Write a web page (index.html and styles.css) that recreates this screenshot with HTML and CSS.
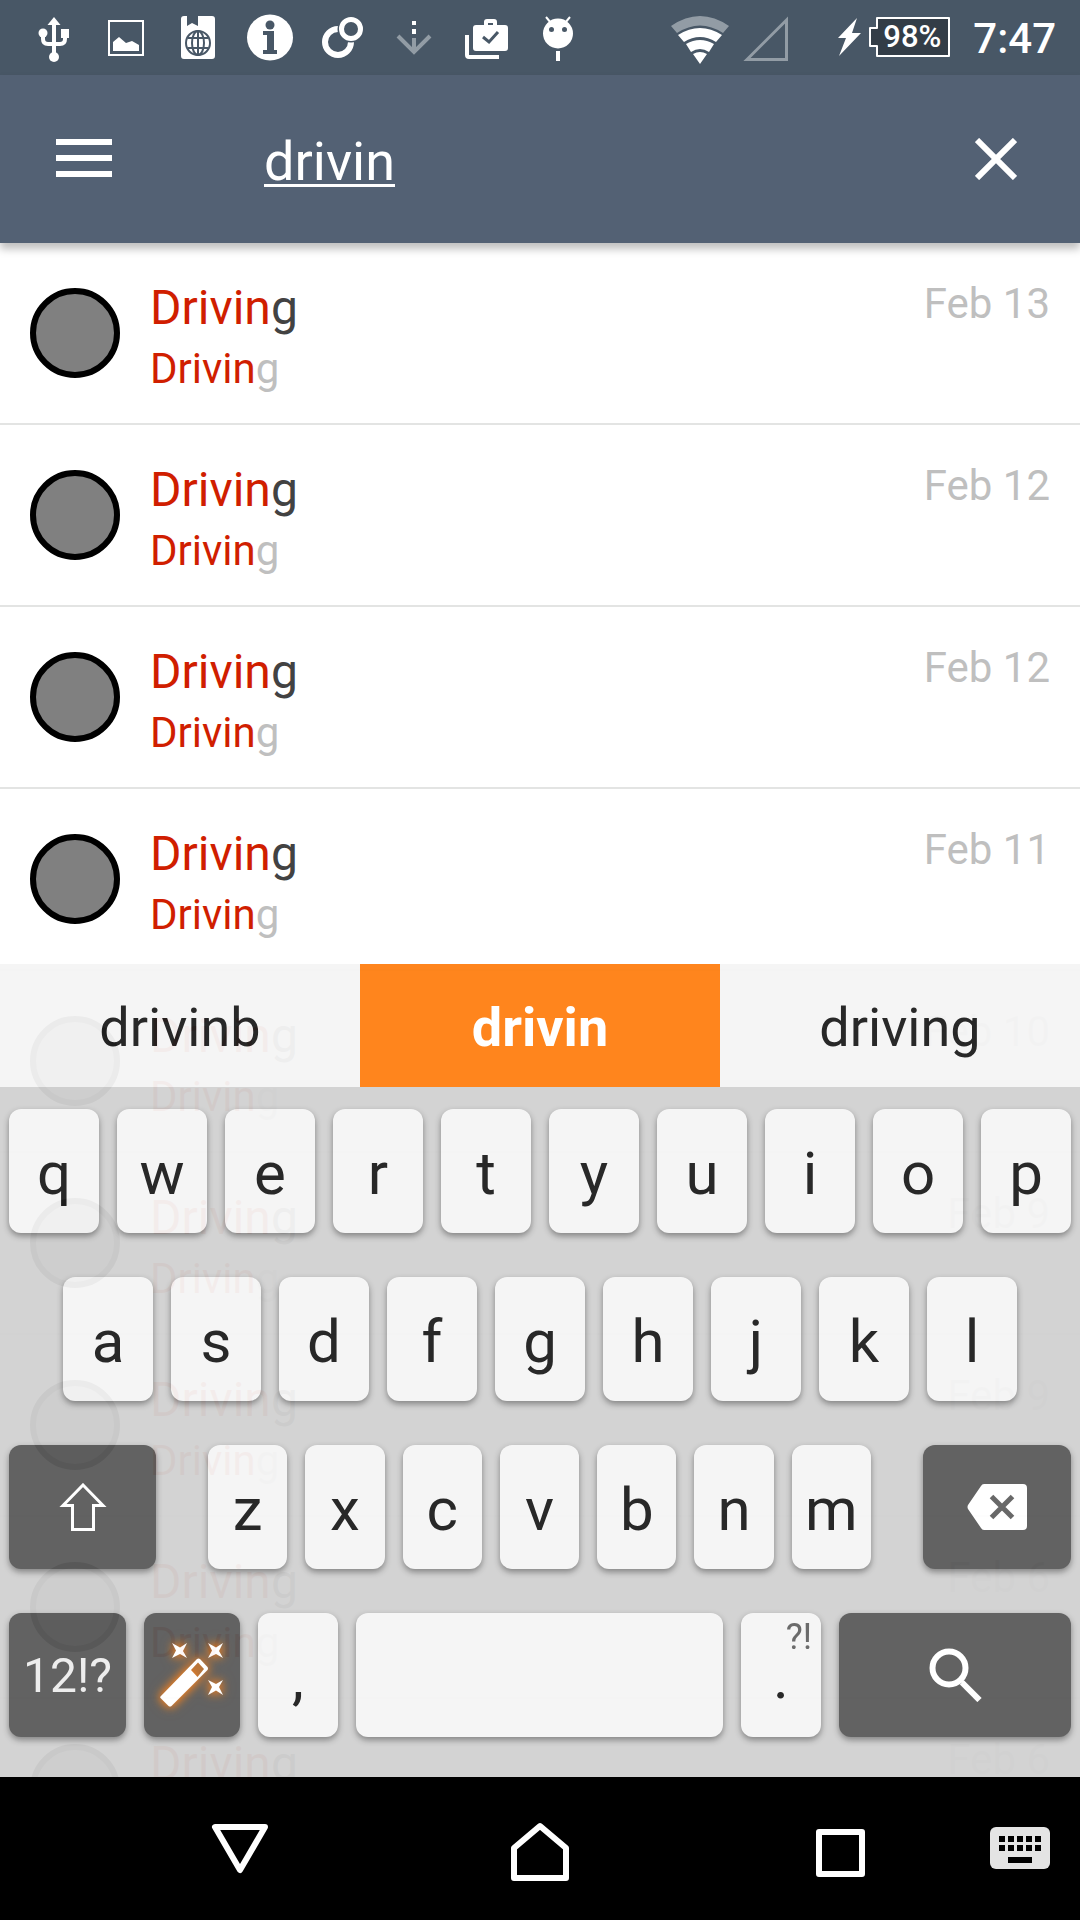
FILE: index.html
```html
<!DOCTYPE html>
<html lang="en">
<head>
<meta charset="utf-8">
<meta name="viewport" content="width=device-width, initial-scale=1">
<title>Search</title>
<link rel="stylesheet" href="styles.css">
</head>
<body>
<div class="app">
  <header class="status">
    <div class="status-left">
      <svg class="status-icon" viewBox="0 0 72 75" aria-hidden="true">
        <g fill="none" stroke="#fff" stroke-width="4"><path d="M36 24V56M25 34v5q0 5 5 5h12q5 0 5-5v-5"/></g>
        <path fill="#fff" d="M36 17l6.500 8h-13zM43 29h8v9h-8z"/><circle cx="25" cy="33" r="4.500" fill="#fff"/><circle cx="36" cy="57" r="5" fill="#fff"/>
      </svg>
      <svg class="status-icon" viewBox="0 0 72 75" aria-hidden="true">
        <path fill="none" stroke="#fff" stroke-width="2" d="M19 21h34v34H19z"/>
        <path fill="#fff" d="M23 51V42l6-5 7 6 6-2 7 4v6z"/>
      </svg>
      <svg class="status-icon" viewBox="0 0 72 75" aria-hidden="true">
        <path fill="#fff" d="M22 16h3v10l5-3 6 3V16h14q3 0 3 3v37q0 3-3 3H22q-3 0-3-3V19q0-3 3-3z"/>
        <g fill="none" stroke="#485766" stroke-width="2"><circle cx="36" cy="43" r="12"/><ellipse cx="36" cy="43" rx="6" ry="12"/><path d="M36 31v24M26 38h20M26 48h20"/></g>
      </svg>
      <svg class="status-icon" viewBox="0 0 72 75" aria-hidden="true">
        <circle cx="36" cy="37.500" r="23" fill="#fff"/>
        <circle cx="36" cy="25" r="4.500" fill="#485766"/>
        <path fill="#485766" d="M29 31h11v19h3v4H29v-4h4V35h-4z"/>
      </svg>
      <svg class="status-icon" viewBox="0 0 72 75" aria-hidden="true">
        <circle cx="32" cy="42" r="13" fill="none" stroke="#fff" stroke-width="6"/>
        <circle cx="45" cy="29" r="13.500" fill="#485766"/>
        <circle cx="45" cy="29" r="9.500" fill="none" stroke="#fff" stroke-width="5"/>
      </svg>
      <svg class="status-icon" viewBox="0 0 72 75" aria-hidden="true">
        <path fill="#fff" d="M34 21h4v4h-4zM34 29h4v5h-4z"/>
        <path fill="none" stroke="#929ca5" stroke-width="4" d="M36 38v13M20 36l16 16 16-16"/>
      </svg>
      <svg class="status-icon" viewBox="0 0 72 75" aria-hidden="true">
        <path fill="none" stroke="#fff" stroke-width="4" d="M17 35v20q0 2 2 2h30"/>
        <path fill="#fff" fill-rule="evenodd" d="M26 25h8v-3q0-3 3-3h7q3 0 3 3v3h8q3 0 3 3v20q0 3-3 3H26q-3 0-3-3V28q0-3 3-3zM38 23v2h5v-2z"/>
        <path fill="none" stroke="#485766" stroke-width="3" d="M33 37l6 5 9-10"/>
      </svg>
      <svg class="status-icon" viewBox="0 0 72 75" aria-hidden="true">
        <circle cx="36" cy="33.500" r="15" fill="#fff"/>
        <path fill="none" stroke="#fff" stroke-width="2" d="M24 17l5 6M48 17l-5 6"/>
        <circle cx="29.500" cy="29.500" r="2.500" fill="#485766"/><circle cx="42.500" cy="29.500" r="2.500" fill="#485766"/>
        <path fill="#fff" d="M34 51h4v10h-4z"/>
      </svg>
    </div>
    <div class="status-right">
      <svg class="wifi" viewBox="0 0 58 75" aria-hidden="true">
        <path fill="#929ca5" d="M0 26Q29 6 58 26L52 33Q29 18 6 33z"/>
        <path fill="#fff" d="M7 35Q29 21 51 35l-6 7Q29 32 13 42zM15 44Q29 36 43 44l-5 8Q29 46 20 52zM22 54q7-4 14 0l-7 10z"/>
      </svg>
      <svg class="signal" viewBox="0 0 46 75" aria-hidden="true">
        <path fill="none" stroke="#929ca5" stroke-width="3" d="M4 59.500L43.500 20v39.500z"/>
      </svg>
      <svg class="bolt" viewBox="0 0 23 75" aria-hidden="true">
        <path fill="#fff" d="M19 18L14 33h9L1 56l7-18H0z"/>
      </svg>
      <span class="battery">
        <svg class="battery-shape" viewBox="0 0 81 40" aria-hidden="true">
          <path fill="#333d47" stroke="#fff" stroke-width="2" stroke-linejoin="round" d="M8 1h72v38H8V29H1V11h7z"/>
        </svg>
        <span class="battery-text">98%</span>
      </span>
      <time class="clock">7:47</time>
    </div>
  </header>

  <div class="toolbar">
    <button class="icon-button" type="button" aria-label="Menu">
      <svg class="menu-icon" viewBox="0 0 56 42" aria-hidden="true"><path fill="#fff" d="M0 1h56v6H0zM0 17h56v6H0zM0 33h56v6H0z"/></svg>
    </button>
    <input class="search" type="text" value="drivin" aria-label="Search">
    <button class="icon-button" type="button" aria-label="Clear">
      <svg class="clear-icon" viewBox="0 0 42 42" aria-hidden="true"><path fill="none" stroke="#fff" stroke-width="6" d="M2 2l38 38M40 2L2 40"/></svg>
    </button>
  </div>

  <main class="content">
    <ul class="results">
      <li class="row"><span class="avatar"></span><div class="text"><h2 class="title"><mark>Drivin</mark>g</h2><p class="subtitle"><mark>Drivin</mark>g</p></div><time class="date">Feb 13</time></li>
      <li class="row"><span class="avatar"></span><div class="text"><h2 class="title"><mark>Drivin</mark>g</h2><p class="subtitle"><mark>Drivin</mark>g</p></div><time class="date">Feb 12</time></li>
      <li class="row"><span class="avatar"></span><div class="text"><h2 class="title"><mark>Drivin</mark>g</h2><p class="subtitle"><mark>Drivin</mark>g</p></div><time class="date">Feb 12</time></li>
      <li class="row"><span class="avatar"></span><div class="text"><h2 class="title"><mark>Drivin</mark>g</h2><p class="subtitle"><mark>Drivin</mark>g</p></div><time class="date">Feb 11</time></li>
      <li class="row"><span class="avatar"></span><div class="text"><h2 class="title"><mark>Drivin</mark>g</h2><p class="subtitle"><mark>Drivin</mark>g</p></div><time class="date">Feb 10</time></li>
      <li class="row"><span class="avatar"></span><div class="text"><h2 class="title"><mark>Drivin</mark>g</h2><p class="subtitle"><mark>Drivin</mark>g</p></div><time class="date">Feb 9</time></li>
      <li class="row"><span class="avatar"></span><div class="text"><h2 class="title"><mark>Drivin</mark>g</h2><p class="subtitle"><mark>Drivin</mark>g</p></div><time class="date">Feb 9</time></li>
      <li class="row"><span class="avatar"></span><div class="text"><h2 class="title"><mark>Drivin</mark>g</h2><p class="subtitle"><mark>Drivin</mark>g</p></div><time class="date">Feb 6</time></li>
      <li class="row"><span class="avatar"></span><div class="text"><h2 class="title"><mark>Drivin</mark>g</h2><p class="subtitle"><mark>Drivin</mark>g</p></div><time class="date">Feb 6</time></li>
    </ul>

    <section class="keyboard" aria-label="Keyboard">
      <div class="suggestions">
        <button class="suggestion" type="button">drivinb</button>
        <button class="suggestion selected" type="button">drivin</button>
        <button class="suggestion" type="button">driving</button>
      </div>
      <div class="keys">
        <div class="key-row">
          <button class="key" type="button">q</button><button class="key" type="button">w</button><button class="key" type="button">e</button><button class="key" type="button">r</button><button class="key" type="button">t</button><button class="key" type="button">y</button><button class="key" type="button">u</button><button class="key" type="button">i</button><button class="key" type="button">o</button><button class="key" type="button">p</button>
        </div>
        <div class="key-row key-row-inset">
          <button class="key" type="button">a</button><button class="key" type="button">s</button><button class="key" type="button">d</button><button class="key" type="button">f</button><button class="key" type="button">g</button><button class="key" type="button">h</button><button class="key" type="button">j</button><button class="key" type="button">k</button><button class="key" type="button">l</button>
        </div>
        <div class="key-row key-row-shift">
          <button class="key key-dark" type="button" aria-label="Shift">
            <svg class="shift-icon" viewBox="0 0 48 48" aria-hidden="true"><path fill="none" stroke="#fff" stroke-width="3" d="M24 2L44 22.500H34.500v24h-21v-24H4z"/></svg>
          </button>
          <div class="letters">
            <button class="key" type="button">z</button><button class="key" type="button">x</button><button class="key" type="button">c</button><button class="key" type="button">v</button><button class="key" type="button">b</button><button class="key" type="button">n</button><button class="key" type="button">m</button>
          </div>
          <button class="key key-dark" type="button" aria-label="Backspace">
            <svg class="backspace-icon" viewBox="0 0 60 46" aria-hidden="true"><path fill="#fff" d="M17 0h39q4 0 4 4v38q0 4-4 4H17q-2 0-3-2L1 25q-1-2 0-4L14 2q1-2 3-2z"/><path stroke="#626262" stroke-width="5" d="M24.500 12.500l21 21M45.500 12.500l-21 21"/></svg>
          </button>
        </div>
        <div class="key-row key-row-bottom">
          <button class="key key-dark key-symbols" type="button">12!?</button>
          <button class="key key-dark" type="button" aria-label="Magic wand">
            <svg class="wand-icon" viewBox="0 0 64 64" aria-hidden="true">
              <path fill="#fff" fill-rule="evenodd" d="M0.500 53.500L37 16q1.500-1 3 0l7.500 8q1 1.500 0 3L11.500 63q-1.500 1-3 0L0.500 55q-0.700-.7 0-1.500zM31 27l6.500 7 6.500-8-6-6.500z"/>
              <path fill="#fff" d="M12 0l8 4.500L27 0l-4 8 4 7-7-4-8 4 4-7.500zM48 0l8 4.500L63 0l-4 8 4 7-7-4-8 4 4-7.500zM48 37l8 4 7-4-4 7 4 8-7-4.500L48 52l4-8z"/>
            </svg>
          </button>
          <button class="key" type="button">,</button>
          <button class="key" type="button" aria-label="Space"></button>
          <button class="key key-period" type="button">.<span class="hint">?!</span></button>
          <button class="key key-dark" type="button" aria-label="Search">
            <svg class="search-icon" viewBox="0 0 53 54" aria-hidden="true"><circle cx="20" cy="20" r="16.500" fill="none" stroke="#fff" stroke-width="6"/><path stroke="#fff" stroke-width="6" d="M33 34.500L50.500 52"/><path stroke="#fff" stroke-width="3" d="M31 31l5 5"/></svg>
          </button>
        </div>
      </div>
    </section>
  </main>

  <nav class="nav">
    <button class="nav-button" type="button" aria-label="Back">
      <svg class="nav-icon" viewBox="0 0 60 60" aria-hidden="true"><path fill="none" stroke="#fff" stroke-width="6" stroke-linejoin="round" d="M5 6h50L30 49z"/></svg>
    </button>
    <button class="nav-button" type="button" aria-label="Home">
      <svg class="nav-icon" viewBox="0 0 60 60" aria-hidden="true"><path fill="none" stroke="#fff" stroke-width="6" stroke-linejoin="round" d="M4 27L30 5l26 22v30H4z"/></svg>
    </button>
    <button class="nav-button" type="button" aria-label="Recent apps">
      <svg class="nav-icon" viewBox="0 0 60 60" aria-hidden="true"><path fill="none" stroke="#fff" stroke-width="6" stroke-linejoin="round" d="M9 11h43v42H9z"/></svg>
    </button>
    <button class="nav-switch" type="button" aria-label="Switch keyboard">
      <svg class="nav-icon" viewBox="0 0 60 60" aria-hidden="true"><rect y="6" width="60" height="42" rx="6" fill="#e4e4e4"/><path fill="#000" d="M9 15h6v6H9zM18 15h6v6h-6zM27 15h6v6h-6zM36 15h6v6h-6zM45 15h6v6h-6zM9 24h6v6H9zM18 24h6v6h-6zM27 24h6v6h-6zM36 24h6v6h-6zM45 24h6v6h-6zM18 36h24v6H18z"/></svg>
    </button>
  </nav>
</div>
</body>
</html>
```

FILE: styles.css
```css
* {
  box-sizing: border-box;
}

body {
  margin: 0;
  font-family: Roboto, "Liberation Sans", sans-serif;
  background: #fff;
}

button,
input {
  margin: 0;
  padding: 0;
  border: 0;
  background: none;
  font: inherit;
  color: inherit;
}

svg {
  display: block;
}

.app {
  display: flex;
  flex-direction: column;
  height: 100vh;
}

/* Status bar */
.status {
  display: flex;
  justify-content: space-between;
  flex: none;
  height: 75px;
  padding: 0 24px 0 18px;
  background: #485766;
  color: #fff;
}

.status-left,
.status-right {
  display: flex;
  align-items: center;
}

.status-icon {
  width: 72px;
  height: 75px;
}

.wifi {
  width: 58px;
  height: 75px;
  margin-right: 14px;
}

.signal {
  width: 46px;
  height: 75px;
  margin-right: 49px;
}

.bolt {
  width: 23px;
  height: 75px;
  margin-right: 8px;
}

.battery {
  display: grid;
  padding-bottom: 1px;
  margin-right: 23px;
}

.battery-shape,
.battery-text {
  grid-area: 1 / 1;
}

.battery-shape {
  width: 81px;
  height: 40px;
}

.battery-text {
  padding-left: 5px;
  font-size: 31px;
  font-weight: 500;
  line-height: 40px;
  text-align: center;
}

.clock {
  font-size: 42px;
  font-weight: 500;
  line-height: 48px;
  padding-top: 3px;
}

/* Search toolbar */
.toolbar {
  position: relative;
  z-index: 1;
  display: flex;
  align-items: center;
  flex: none;
  height: 168px;
  background: #536174;
  box-shadow: 0 6px 8px rgba(0, 0, 0, 0.25);
  color: #fff;
}

.icon-button {
  display: flex;
  align-items: center;
  justify-content: center;
  flex: none;
  width: 168px;
  height: 168px;
}

.menu-icon {
  width: 56px;
  height: 42px;
}

.clear-icon {
  width: 42px;
  height: 42px;
}

.search {
  flex: 1;
  min-width: 0;
  height: 76px;
  padding: 4px 0 0 96px;
  font-size: 54px;
  line-height: 72px;
  text-decoration: underline;
  text-decoration-thickness: 3px;
  text-underline-offset: 4px;
  text-decoration-skip-ink: none;
  outline: none;
}

/* Results */
.content {
  position: relative;
  flex: 1;
  min-height: 0;
  overflow: hidden;
}

.results {
  margin: 0;
  padding: 0;
  list-style: none;
}

.row {
  display: flex;
  gap: 30px;
  height: 182px;
  padding: 32px 30px 0;
  border-bottom: 2px solid #e3e4e3;
}

.avatar {
  flex: none;
  width: 90px;
  height: 90px;
  margin-top: 13px;
  border: 6px solid #000;
  border-radius: 50%;
  background: #808080;
}

.text {
  flex: 1;
}

.title,
.subtitle {
  margin: 0;
  font-weight: 400;
}

.title {
  font-size: 48px;
  line-height: 66px;
  color: #424242;
}

.subtitle {
  font-size: 42px;
  line-height: 56px;
  color: #bfbfbf;
}

.date {
  font-size: 42px;
  line-height: 58px;
  color: #bfbfbf;
}

mark {
  background: none;
  color: #d01e00;
}

/* Keyboard: a slightly translucent sheet over the results */
.keyboard {
  position: absolute;
  right: 0;
  bottom: 0;
  left: 0;
  opacity: 0.96;
  color: #202020;
}

.suggestions {
  display: grid;
  grid-template-columns: repeat(3, 1fr);
}

.suggestion {
  height: 123px;
  padding-top: 3px;
  background: #f5f5f5;
  font-size: 54px;
}

.suggestion.selected {
  background: #ff8114;
  color: #fff;
  font-weight: 700;
}

.keys {
  display: grid;
  gap: 44px;
  padding: 22px 9px 40px;
  background: #d2d2d2;
}

.key-row {
  display: grid;
  grid-template-columns: repeat(10, 1fr);
  gap: 18px;
}

.key-row-inset {
  grid-template-columns: repeat(9, 1fr);
  padding: 0 54px;
}

.key-row-shift {
  grid-template-columns: 147fr 663fr 148fr;
  gap: 52px;
}

.key-row-bottom {
  grid-template-columns: 117fr 96fr 80fr 367fr 80fr 232fr;
}

.letters {
  display: grid;
  grid-template-columns: repeat(7, 1fr);
  gap: 18px;
}

.key {
  display: flex;
  align-items: center;
  justify-content: center;
  min-width: 0;
  height: 124px;
  padding-top: 5px;
  border-radius: 12px;
  background: #f5f5f5;
  box-shadow: 0 3px 6px rgba(0, 0, 0, 0.4);
  font-size: 60px;
}

.key-dark {
  padding-top: 0;
  background: #5c5c5c;
}

.key-symbols {
  color: #ededed;
  font-size: 48px;
}

.key-period {
  position: relative;
}

.hint {
  position: absolute;
  top: 2px;
  right: 9px;
  font-size: 36px;
  line-height: 44px;
  color: #666;
}

.shift-icon {
  width: 48px;
  height: 48px;
}

.backspace-icon {
  width: 60px;
  height: 46px;
}

.wand-icon {
  width: 64px;
  height: 64px;
  overflow: visible;
  filter: drop-shadow(0 0 5px #ff8012) drop-shadow(0 0 4px rgba(255, 128, 18, 0.5));
}

.search-icon {
  width: 53px;
  height: 54px;
}

/* System navigation */
.nav {
  display: flex;
  flex: none;
  height: 143px;
  padding: 4px 30px 0 90px;
  background: #000;
}

.nav-button,
.nav-switch {
  display: flex;
  align-items: center;
  justify-content: center;
}

.nav-button {
  flex: 1;
}

.nav-switch {
  width: 60px;
}

.nav-icon {
  width: 60px;
  height: 60px;
}
```
